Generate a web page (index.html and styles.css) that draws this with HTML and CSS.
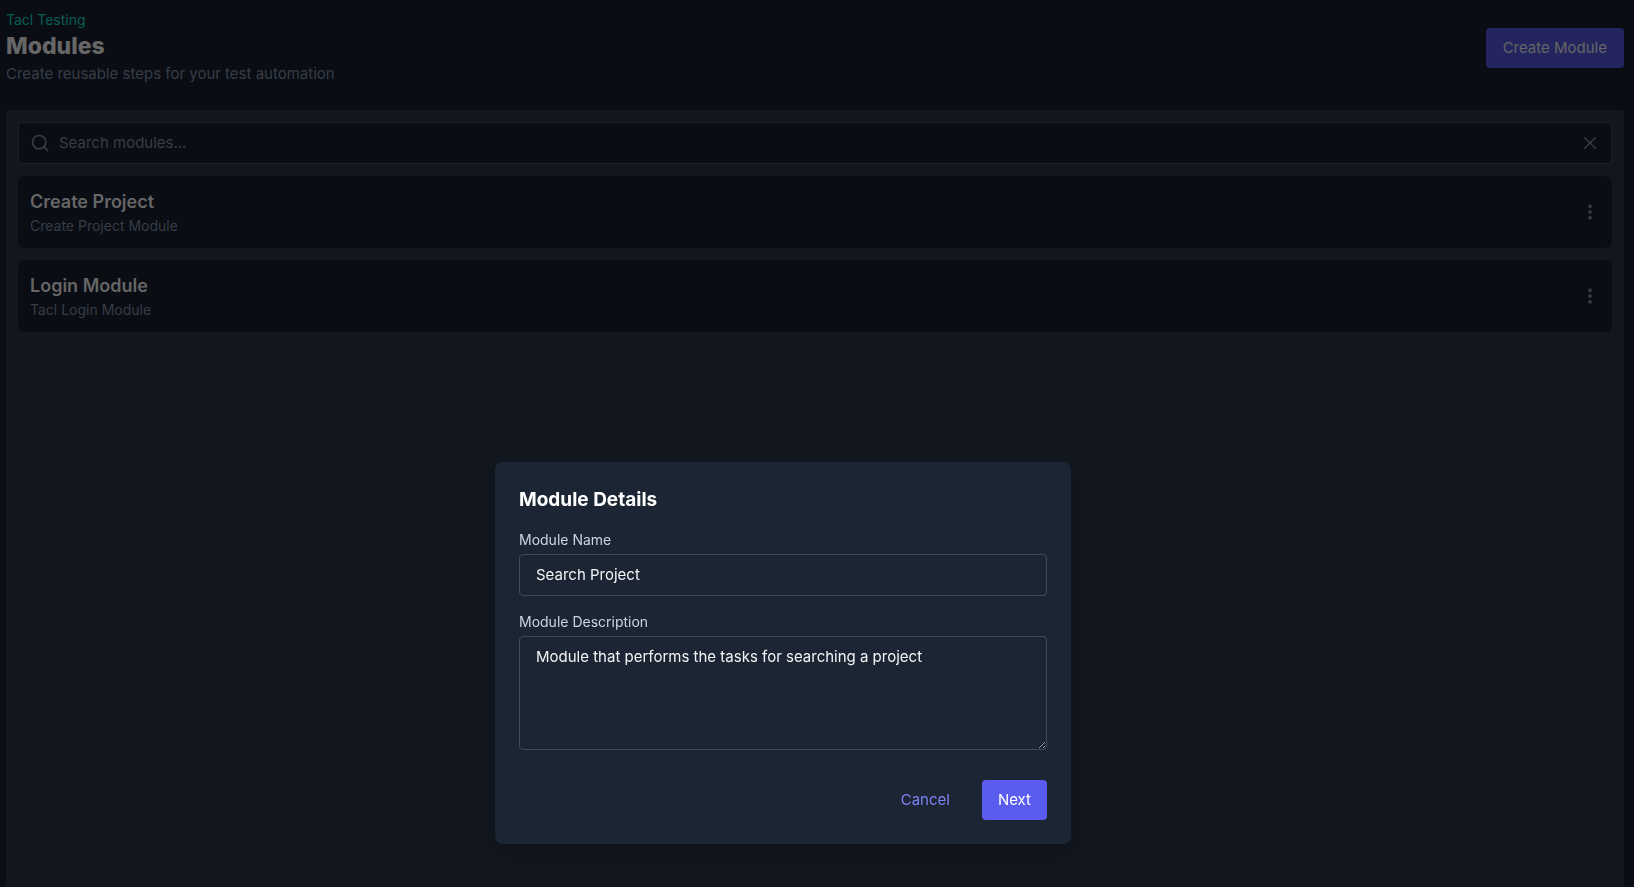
FILE: index.html
```html
<!DOCTYPE html>
<html lang="en">
<head>
<meta charset="utf-8">
<title>Modules</title>
<link rel="stylesheet" href="styles.css">
</head>
<body>
<div class="page">
  <header class="header">
    <div>
      <a class="project" href="#">Tacl Testing</a>
      <h1 class="title">Modules</h1>
      <p class="subtitle">Create reusable steps for your test automation</p>
    </div>
    <button class="btn btn-create" type="button">Create Module</button>
  </header>
  <main class="panel">
    <div class="search">
      <svg class="icon icon-search" viewBox="0 0 24 24"><circle cx="11" cy="11" r="8"/><path d="m21 21-4.3-4.3"/></svg>
      <input class="search-input" type="text" placeholder="Search modules..." aria-label="Search modules">
      <button class="icon-btn" type="button" aria-label="Clear search"><svg class="icon" viewBox="0 0 24 24"><path d="M18.5 5.5l-13 13M5.5 5.5l13 13"/></svg></button>
    </div>
    <article class="card">
      <div>
        <h2 class="card-title">Create Project</h2>
        <p class="card-text">Create Project Module</p>
      </div>
      <button class="icon-btn" type="button" aria-label="Create Project options"><svg class="icon icon-dots" viewBox="0 0 24 24"><circle cx="12" cy="5" r="1.5"/><circle cx="12" cy="12" r="1.5"/><circle cx="12" cy="19" r="1.5"/></svg></button>
    </article>
    <article class="card">
      <div>
        <h2 class="card-title">Login Module</h2>
        <p class="card-text">Tacl Login Module</p>
      </div>
      <button class="icon-btn" type="button" aria-label="Login Module options"><svg class="icon icon-dots" viewBox="0 0 24 24"><circle cx="12" cy="5" r="1.5"/><circle cx="12" cy="12" r="1.5"/><circle cx="12" cy="19" r="1.5"/></svg></button>
    </article>
  </main>
</div>
<div class="overlay">
  <form class="modal" role="dialog" aria-labelledby="modal-title">
    <h2 class="modal-title" id="modal-title">Module Details</h2>
    <div class="field">
      <label class="label" for="name">Module Name</label>
      <input class="control" id="name" type="text" value="Search Project">
    </div>
    <div class="field">
      <label class="label" for="description">Module Description</label>
      <textarea class="control" id="description" rows="4">Module that performs the tasks for searching a project</textarea>
    </div>
    <div class="actions">
      <button class="btn btn-cancel" type="button">Cancel</button>
      <button class="btn btn-next" type="button">Next</button>
    </div>
  </form>
</div>
</body>
</html>
```
FILE: styles.css
```css
* {
  box-sizing: border-box;
  margin: 0;
}

body {
  background: #0a0d14;
  color: #666666;
  font: 15px/24px Inter, "Liberation Sans", sans-serif;
}

button,
input,
textarea {
  font: inherit;
  color: inherit;
}

.page {
  display: flex;
  flex-direction: column;
  gap: 24px;
  height: 100vh;
  padding: 10px 10px 0 6px;
}

.header {
  display: flex;
  align-items: center;
  justify-content: space-between;
}

.project {
  display: block;
  color: #075e53;
  font-size: 14px;
  line-height: 20px;
  text-decoration: none;
}

.title {
  font-size: 23px;
  line-height: 32px;
  font-weight: 800;
}

.subtitle {
  color: #363d48;
}

.btn {
  padding: 8px 16px;
  border: 0;
  border-radius: 4px;
}

.btn-create {
  padding: 8px 17px;
  background: #24255f;
}

.panel {
  flex: 1;
  display: flex;
  flex-direction: column;
  gap: 12px;
  padding: 12px;
  border-radius: 4px 4px 0 0;
  background: #12161e;
}

.search {
  display: flex;
  align-items: center;
  gap: 9px;
  padding: 8px 11px;
  border: 1px solid #1b202a;
  border-radius: 4px;
  background: #0a0d14;
}

.search-input {
  flex: 1;
  min-width: 0;
  height: 24px;
  padding: 0;
  border: 0;
  outline: 0;
  background: transparent;
}

.search-input::placeholder {
  color: #3a3d42;
  opacity: 1;
}

.icon {
  display: block;
  width: 20px;
  height: 20px;
  fill: none;
  stroke: #41464f;
  stroke-width: 1.5;
  stroke-linecap: round;
  stroke-linejoin: round;
}

.icon-search {
  stroke: #363d48;
  stroke-width: 2;
}

.icon-dots {
  fill: #363b44;
  stroke: #363b44;
}

.icon-btn {
  padding: 0;
  border: 0;
  background: transparent;
}

.card {
  display: flex;
  align-items: center;
  justify-content: space-between;
  padding: 12px;
  border-radius: 6px;
  background: #0a0d14;
}

.card-title {
  font-size: 18px;
  line-height: 28px;
  font-weight: 600;
}

.card-text {
  color: #363d48;
  font-size: 14px;
  line-height: 20px;
}

.overlay {
  position: fixed;
  inset: 0;
  display: flex;
  align-items: flex-end;
  justify-content: center;
  padding: 0 68px 43px 0;
}

.modal {
  display: flex;
  flex-direction: column;
  gap: 16px;
  width: 100%;
  max-width: 576px;
  padding: 24px;
  border-radius: 8px;
  background: #1c2533;
  box-shadow: 0 10px 15px -3px rgb(0 0 0 / 10%), 0 4px 6px -4px rgb(0 0 0 / 10%);
}

.modal-title {
  color: #ffffff;
  font-size: 19px;
  line-height: 28px;
  font-weight: 700;
}

.field {
  display: flex;
  flex-direction: column;
  gap: 4px;
}

.label {
  color: #cbd5e1;
  font-size: 14px;
  line-height: 20px;
}

.control {
  display: block;
  width: 100%;
  padding: 8px 16px;
  border: 1px solid #3f4b5c;
  border-radius: 4px;
  outline: 0;
  background: transparent;
  color: #f3f4f6;
  resize: vertical;
}

.actions {
  display: flex;
  justify-content: flex-end;
  gap: 16px;
  padding-top: 14px;
}

.btn-cancel {
  background: transparent;
  color: #7c83f5;
}

.btn-next {
  background: #5a5bef;
  color: #ffffff;
}
```
